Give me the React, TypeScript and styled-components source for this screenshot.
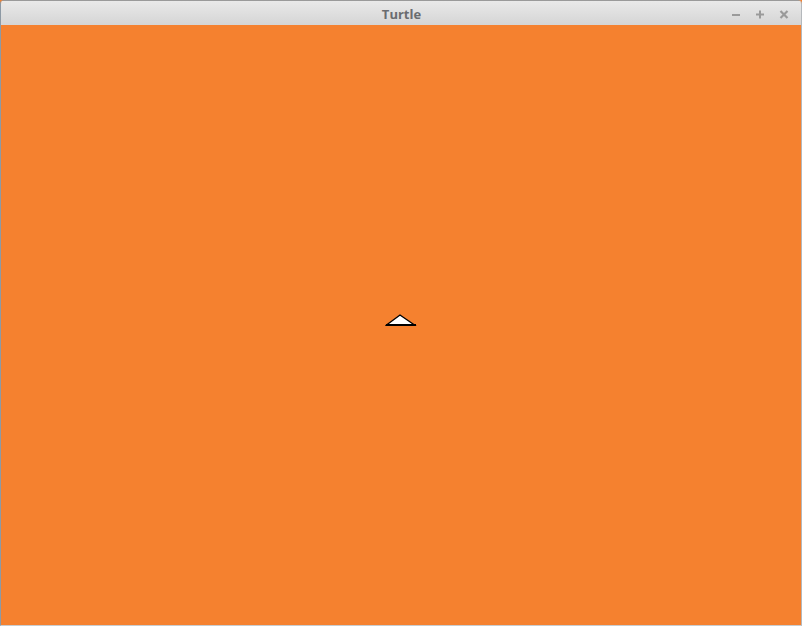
import styled, { createGlobalStyle } from "styled-components";

const Global = createGlobalStyle`
  html, body {
    margin: 0;
    padding: 0;
    background: #f5812f;
    overflow: hidden;
  }
`;

const Window = styled.div`
  display: flex;
  flex-direction: column;
  width: 802px;
  height: 626px;
  box-sizing: border-box;
  border-left: 1px solid #8d99a4;
  border-right: 1px solid #b4b8bc;
  border-bottom: 1px solid #c9ccce;
  border-radius: 4px 4px 0 0;
  overflow: hidden;
  font-family: "Open Sans", "DejaVu Sans", sans-serif;
`;

const TitleBar = styled.div`
  position: relative;
  display: flex;
  align-items: center;
  justify-content: center;
  height: 25px;
  flex: none;
  box-sizing: border-box;
  padding-top: 2px;
  border-top: 1px solid #9a9a9a;
  background: linear-gradient(#e9e9e9, #d5d5d5);
`;

const Title = styled.span`
  font-size: 13px;
  font-weight: 700;
  color: #6a6c70;
  padding-left: 1px;
`;

const Controls = styled.div`
  position: absolute;
  right: 10px;
  top: 1px;
  bottom: 0;
  display: flex;
  align-items: center;
  gap: 10px;
`;

const Control = styled.svg`
  display: block;
  width: 14px;
  height: 14px;
`;

const Canvas = styled.div`
  position: relative;
  flex: 1;
  background: #f5812f;
`;

const Turtle = styled.svg`
  position: absolute;
  left: 384px;
  top: 288px;
`;

export default function App() {
  return (
    <>
      <Global />
      <Window>
        <TitleBar>
          <Title>Turtle</Title>
          <Controls>
            <Control viewBox="0 0 14 14">
              <line x1="3" y1="8" x2="11" y2="8" stroke="#9a9a9a" strokeWidth="2" />
            </Control>
            <Control viewBox="0 0 14 14">
              <line x1="3" y1="7.5" x2="11" y2="7.5" stroke="#9a9a9a" strokeWidth="2" />
              <line x1="7" y1="3.5" x2="7" y2="11.5" stroke="#9a9a9a" strokeWidth="2" />
            </Control>
            <Control viewBox="0 0 14 14">
              <line x1="3.5" y1="4" x2="10.5" y2="11" stroke="#9a9a9a" strokeWidth="2.2" />
              <line x1="10.5" y1="4" x2="3.5" y2="11" stroke="#9a9a9a" strokeWidth="2.2" />
            </Control>
          </Controls>
        </TitleBar>
        <Canvas>
          <Turtle width="32" height="14" viewBox="0 0 32 14">
            <polygon points="1.5,12 15,2 29.5,12" fill="#fff" stroke="#000" strokeWidth="1.4" strokeLinejoin="miter" />
            <line x1="1" y1="12" x2="31" y2="12" stroke="#000" strokeWidth="2" />
          </Turtle>
        </Canvas>
      </Window>
    </>
  );
}
